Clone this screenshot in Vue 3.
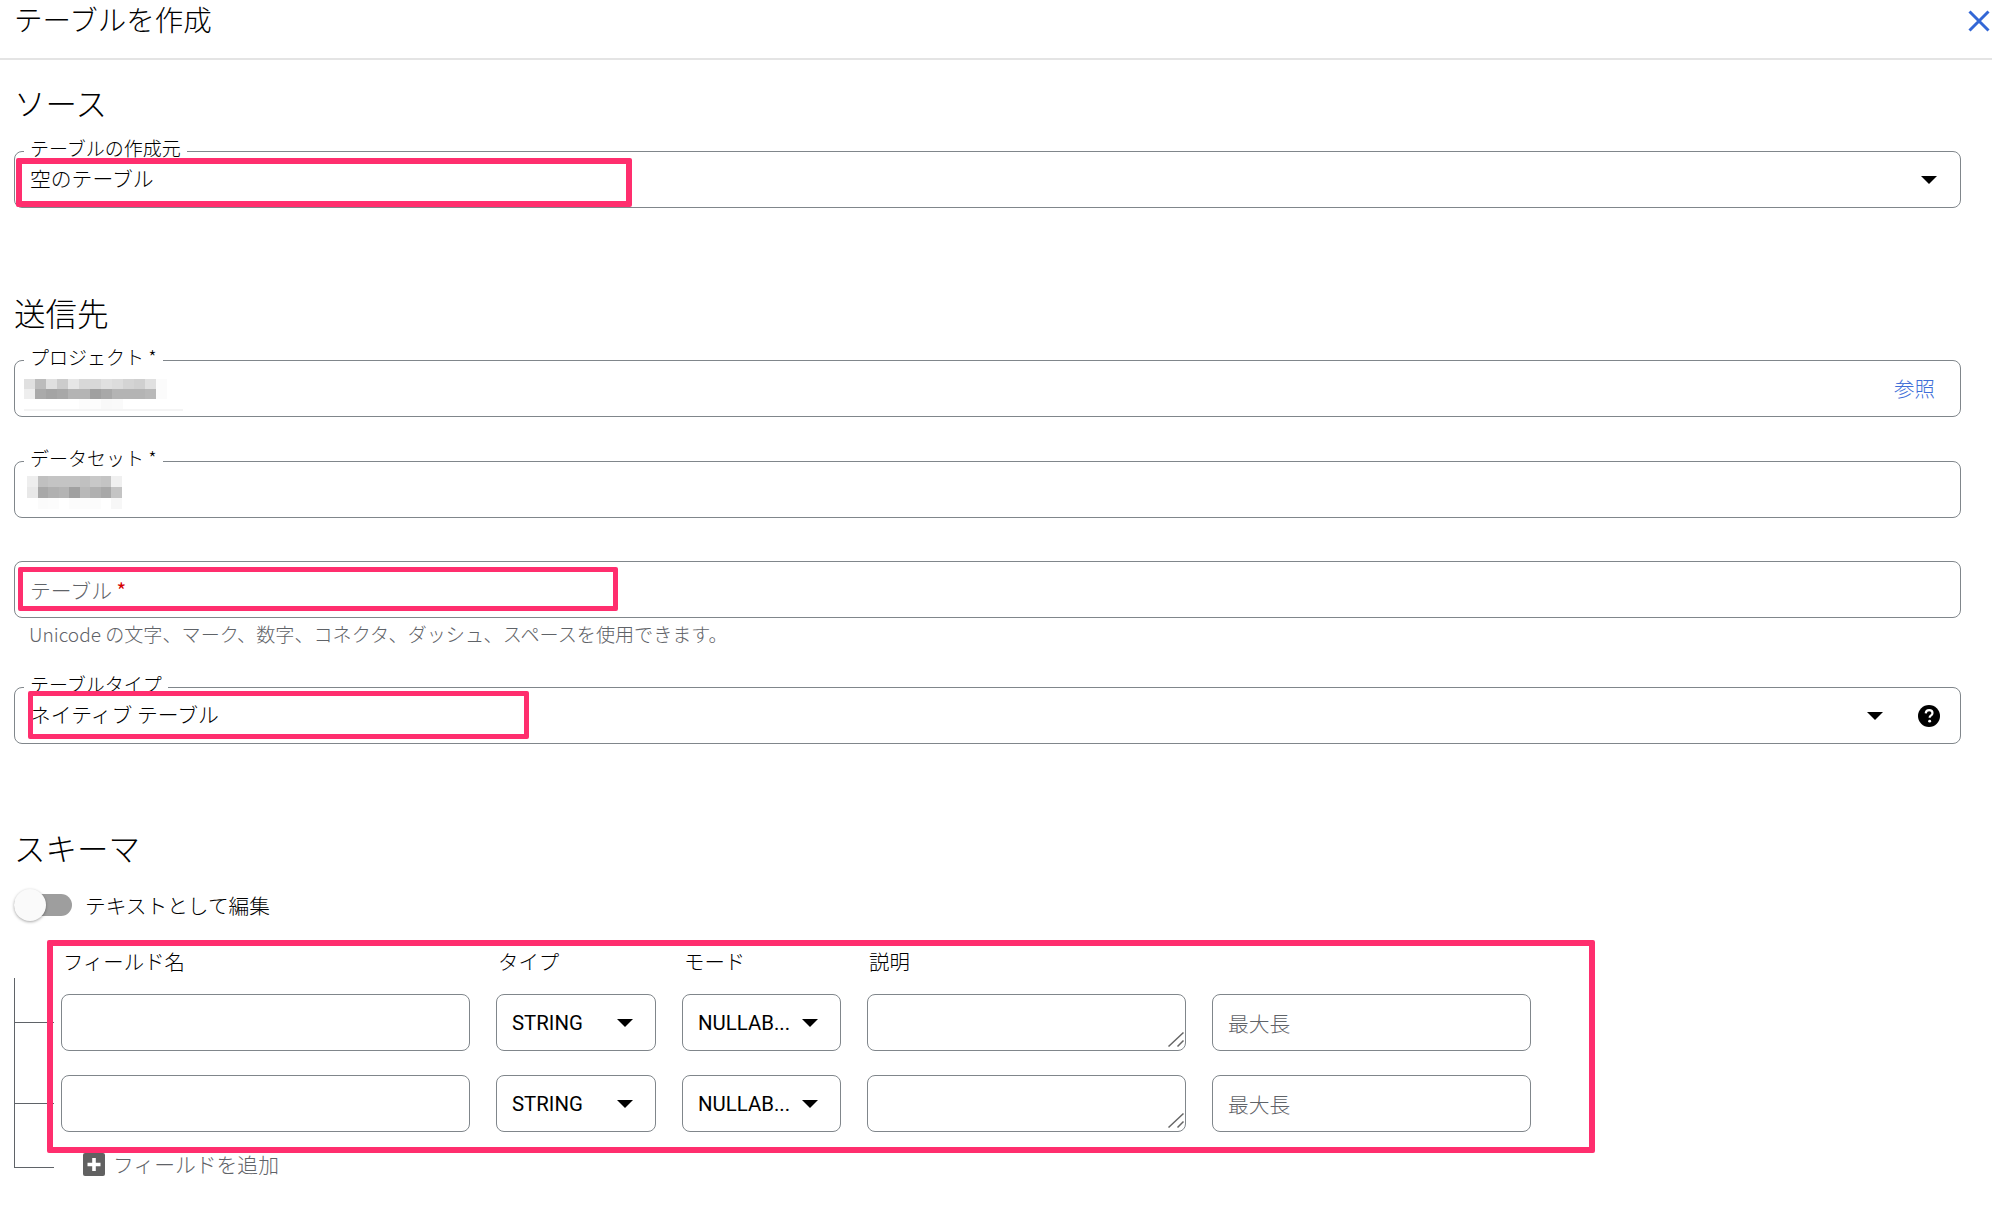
<script setup>
const rows = [0, 1]
const columns = ['フィールド名', 'タイプ', 'モード', '説明']

const projectCells = [
  ['#e0e0e0','#bcbcbc','#e0e0e0','#cccccc','#e6e6e6','#d8d8d8','#d8d8d8','#e0e0e0','#dcdcdc','#d4d4d4','#d0d0d0','#e0e0e0','#fbfbfb'],
  ['#eeeeee','#aaaaaa','#a4a4a4','#a8a8a8','#b4b4b4','#b4b4b4','#a0a0a0','#a8a8a8','#b4b4b4','#b4b4b4','#b4b4b4','#b8b8b8','#fbfbfb'],
  ['#ffffff','#ffffff','#ffffff','#ffffff','#ffffff','#fcfcfc','#fdfdfd','#f9f9f9','#fafafa','#ffffff','#ffffff','#ffffff','#ffffff']
]
const datasetCells = [
  ['#eeeeee','#c0c0c0','#c4c4c4','#c4c4c4','#c4c4c4','#c0c0c0','#c8c8c8','#c4c4c4','#f0f0f0'],
  ['#e8e8e8','#a8a8a8','#b0b0b0','#b4b4b4','#a0a0a0','#b8b8b8','#b0b0b0','#a8a8a8','#c4c4c4'],
  ['#ffffff','#fbfbfb','#fcfcfc','#ffffff','#fcfcfc','#fcfcfc','#fcfcfc','#ffffff','#f7f7f7']
]
</script>

<template>
  <div class="page">
    <header class="topbar">
      <h1 class="title">テーブルを作成</h1>
      <svg class="close" viewBox="0 0 22 22" aria-label="閉じる"><path d="M1.5 1.5 20.5 20.5M20.5 1.5 1.5 20.5" /></svg>
    </header>

    <main class="body">
      <section class="source">
        <h2 class="heading">ソース</h2>
        <div class="field">
          <span class="floating">テーブルの作成元</span>
          <span class="value">空のテーブル</span>
          <span class="arrow"></span>
        </div>
        <div class="mark mark-source"></div>
      </section>

      <section class="destination">
        <h2 class="heading">送信先</h2>
        <div class="field">
          <span class="floating">プロジェクト *</span>
          <div class="mosaic">
            <div v-for="(line, i) in projectCells" :key="i" class="mosaic-line">
              <i v-for="(c, j) in line" :key="j" :style="{ background: c }"></i>
            </div>
            <div class="mosaic-foot"></div>
          </div>
          <span class="browse">参照</span>
        </div>
        <div class="field field-gap">
          <span class="floating">データセット *</span>
          <div class="mosaic mosaic-small">
            <div v-for="(line, i) in datasetCells" :key="i" class="mosaic-line">
              <i v-for="(c, j) in line" :key="j" :style="{ background: c }"></i>
            </div>
          </div>
        </div>
        <div class="field field-gap table-field">
          <span class="placeholder">テーブル <b>*</b></span>
          <div class="mark mark-table"></div>
        </div>
        <p class="helper">Unicode の文字、マーク、数字、コネクタ、ダッシュ、スペースを使用できます。</p>
        <div class="field type-field">
          <span class="floating">テーブルタイプ</span>
          <span class="value">ネイティブ テーブル</span>
          <span class="arrow arrow-type"></span>
          <svg class="help" viewBox="0 0 24 24"><circle cx="12" cy="12" r="12" fill="#000" /><path d="M8.4 9.2c.2-2.2 1.8-3.6 3.8-3.6 2.1 0 3.6 1.3 3.6 3.1 0 1.4-.8 2.2-1.8 2.9-1 .7-1.3 1.2-1.3 2.4" fill="none" stroke="#fff" stroke-width="2.4" /><circle cx="12.7" cy="17.6" r="1.6" fill="#fff" /></svg>
          <div class="mark mark-type"></div>
        </div>
      </section>

      <section class="schema">
        <h2 class="heading">スキーマ</h2>
        <div class="toggle-row">
          <span class="toggle"><span class="thumb"></span></span>
          <span class="toggle-text">テキストとして編集</span>
        </div>
        <div class="tree">
          <div class="grid head">
            <span v-for="c in columns" :key="c" class="col">{{ c }}</span>
          </div>
          <div v-for="r in rows" :key="r" class="grid row">
            <div class="box"></div>
            <div class="box select"><span>STRING</span><span class="arrow small"></span></div>
            <div class="box select"><span>NULLAB...</span><span class="arrow small"></span></div>
            <div class="box area">
              <svg class="grip" viewBox="0 0 20 20"><path d="M3.5 16.5 18.5 2.5M12.5 16.5 18.5 10.5" /></svg>
            </div>
            <div class="box maxlen">最大長</div>
            <span class="branch"></span>
          </div>
          <div class="add">
            <svg class="plus" viewBox="0 0 22 23"><rect width="22" height="23" rx="2" fill="#616161" /><path d="M11 5v13M4.500 11.500h13" stroke="#fff" stroke-width="3.6" /></svg>
            <span>フィールドを追加</span>
          </div>
          <span class="trunk"></span>
          <span class="branch branch-last"></span>
          <div class="mark mark-schema"></div>
        </div>
      </section>
    </main>
  </div>
</template>

<style scoped>
.page {
  width: 1992px;
  height: 1208px;
  overflow: hidden;
  background: #fff;
  color: #000;
  font-family: "Noto Sans CJK JP", "Noto Sans", sans-serif;
  font-weight: 300;
}
.topbar {
  height: 58px;
  border-bottom: 2px solid #e4e4e4;
  display: flex;
  justify-content: space-between;
  align-items: flex-start;
  padding-left: 14px;
  padding-right: 2px;
}
.title {
  margin: 0;
  font-size: 28.5px;
  font-weight: 300;
  line-height: 37px;
}
.close {
  width: 22px;
  height: 22px;
  margin-top: 10px;
}
.close path {
  fill: none;
  stroke: #3367d6;
  stroke-width: 3;
}
.body {
  padding: 0 31px 0 14px;
}
section {
  position: relative;
}
.heading {
  margin: 0;
  font-size: 31.5px;
  font-weight: 300;
  line-height: 44px;
}
.source {
  padding-top: 20px;
}
.source .heading {
  margin-bottom: 27px;
}
.destination {
  padding-top: 82px;
}
.destination .heading {
  margin-bottom: 26px;
}
.schema {
  padding-top: 81px;
}
.field {
  position: relative;
  height: 57px;
  border: 1.5px solid #80868b;
  border-radius: 8px;
  box-sizing: border-box;
  display: flex;
  align-items: center;
  padding: 0 23px 0 15px;
}
.field-gap {
  margin-top: 44px;
}
.table-field {
  margin-top: 43px;
}
.floating {
  position: absolute;
  left: 9px;
  top: -17px;
  padding: 0 6px;
  background: #fff;
  font-size: 19px;
  line-height: 26px;
}
.value {
  font-size: 20.8px;
  line-height: 28px;
  margin-top: -3px;
}
.arrow {
  margin-left: auto;
  width: 0;
  height: 0;
  border-left: 8px solid transparent;
  border-right: 8px solid transparent;
  border-top: 8px solid #000;
}
.arrow-type {
  margin-right: 35px;
}
.help {
  width: 22px;
  height: 22px;
  margin-right: -3px;
}
.browse {
  margin-left: auto;
  margin-right: 2px;
  margin-top: -2px;
  color: #3f6fd8;
  font-size: 20.5px;
  line-height: 28px;
}
.placeholder {
  font-size: 20.8px;
  line-height: 28px;
  color: #5f6368;
}
.placeholder b {
  color: #d50000;
  font-weight: 400;
}
.helper {
  margin: 3px 0 0 15px;
  font-size: 19.1px;
  line-height: 26px;
  color: #5f6368;
}
.type-field {
  margin-top: 40px;
}
.mosaic {
  position: absolute;
  left: 9px;
  top: 18px;
}
.mosaic-small {
  left: 12px;
  top: 14px;
}
.mosaic-line {
  display: flex;
  height: 10px;
}
.mosaic-line i {
  display: block;
  width: 11px;
  height: 10px;
}
.mosaic-small .mosaic-line {
  height: 11px;
}
.mosaic-small .mosaic-line i {
  width: 10.5px;
  height: 11px;
}
.mosaic-foot {
  width: 159px;
  height: 2px;
  background: #f4f4f4;
}
.toggle-row {
  display: flex;
  align-items: center;
  height: 32px;
  margin-top: 20px;
}
.toggle {
  position: relative;
  display: block;
  width: 58px;
  height: 22px;
  border-radius: 11px;
  background: #9e9e9e;
}
.thumb {
  position: absolute;
  left: 0;
  top: -5px;
  width: 32px;
  height: 32px;
  border-radius: 50%;
  background: #fafafa;
  box-shadow: 0 1px 3px rgba(0, 0, 0, .35);
}
.toggle-text {
  margin-left: 13px;
  font-size: 20.7px;
  line-height: 28px;
}
.tree {
  position: relative;
  margin-top: 20px;
  padding-left: 47px;
}
.grid {
  display: grid;
  grid-template-columns: 409px 160px 159px 319px 319px;
  column-gap: 26px;
  width: 1470px;
}
.head {
  height: 40px;
  align-items: center;
  font-size: 20.4px;
  padding-left: 2px;
}
.row {
  position: relative;
  margin-top: 24px;
  height: 57px;
}
.head + .row {
  margin-top: 13px;
}
.box {
  border: 1.5px solid #80868b;
  border-radius: 8px;
  box-sizing: border-box;
  position: relative;
  background: #fff;
}
.select {
  display: flex;
  align-items: center;
  padding: 0 22px 0 15px;
  font-size: 20.4px;
  font-family: "Roboto", "Noto Sans CJK JP", sans-serif;
  font-weight: 400;
}
.grip {
  position: absolute;
  right: 0;
  bottom: 0;
  width: 20px;
  height: 20px;
}
.grip path {
  stroke: #666;
  stroke-width: 1.5;
  fill: none;
}
.maxlen {
  display: flex;
  align-items: center;
  padding-left: 15px;
  font-size: 20.8px;
  color: #5f6368;
}
.add {
  display: flex;
  align-items: center;
  height: 34px;
  margin-top: 15px;
  margin-left: 22px;
  gap: 8px;
  font-size: 20.8px;
  color: #5f6368;
}
.plus {
  width: 22px;
  height: 23px;
}
.trunk {
  position: absolute;
  left: 0;
  top: 37px;
  width: 1px;
  height: 190px;
  background: #5f6368;
}
.branch {
  position: absolute;
  left: -47px;
  top: 28px;
  width: 40px;
  height: 1px;
  background: #5f6368;
}
.branch-last {
  left: 0;
  top: 226px;
}
.mark {
  position: absolute;
  box-sizing: border-box;
  border: 6px solid #ff2e6e;
  border-radius: 2px;
  pointer-events: none;
}
.mark-source {
  left: 2px;
  top: 98px;
  width: 616px;
  height: 49px;
}
.mark-table {
  left: 3px;
  top: 5px;
  width: 600px;
  height: 44px;
  border-width: 5px;
}
.mark-type {
  left: 13px;
  top: 3px;
  width: 501px;
  height: 48px;
  border-width: 5px;
}
.mark-schema {
  left: 33px;
  top: -1px;
  width: 1548px;
  height: 213px;
}
</style>
